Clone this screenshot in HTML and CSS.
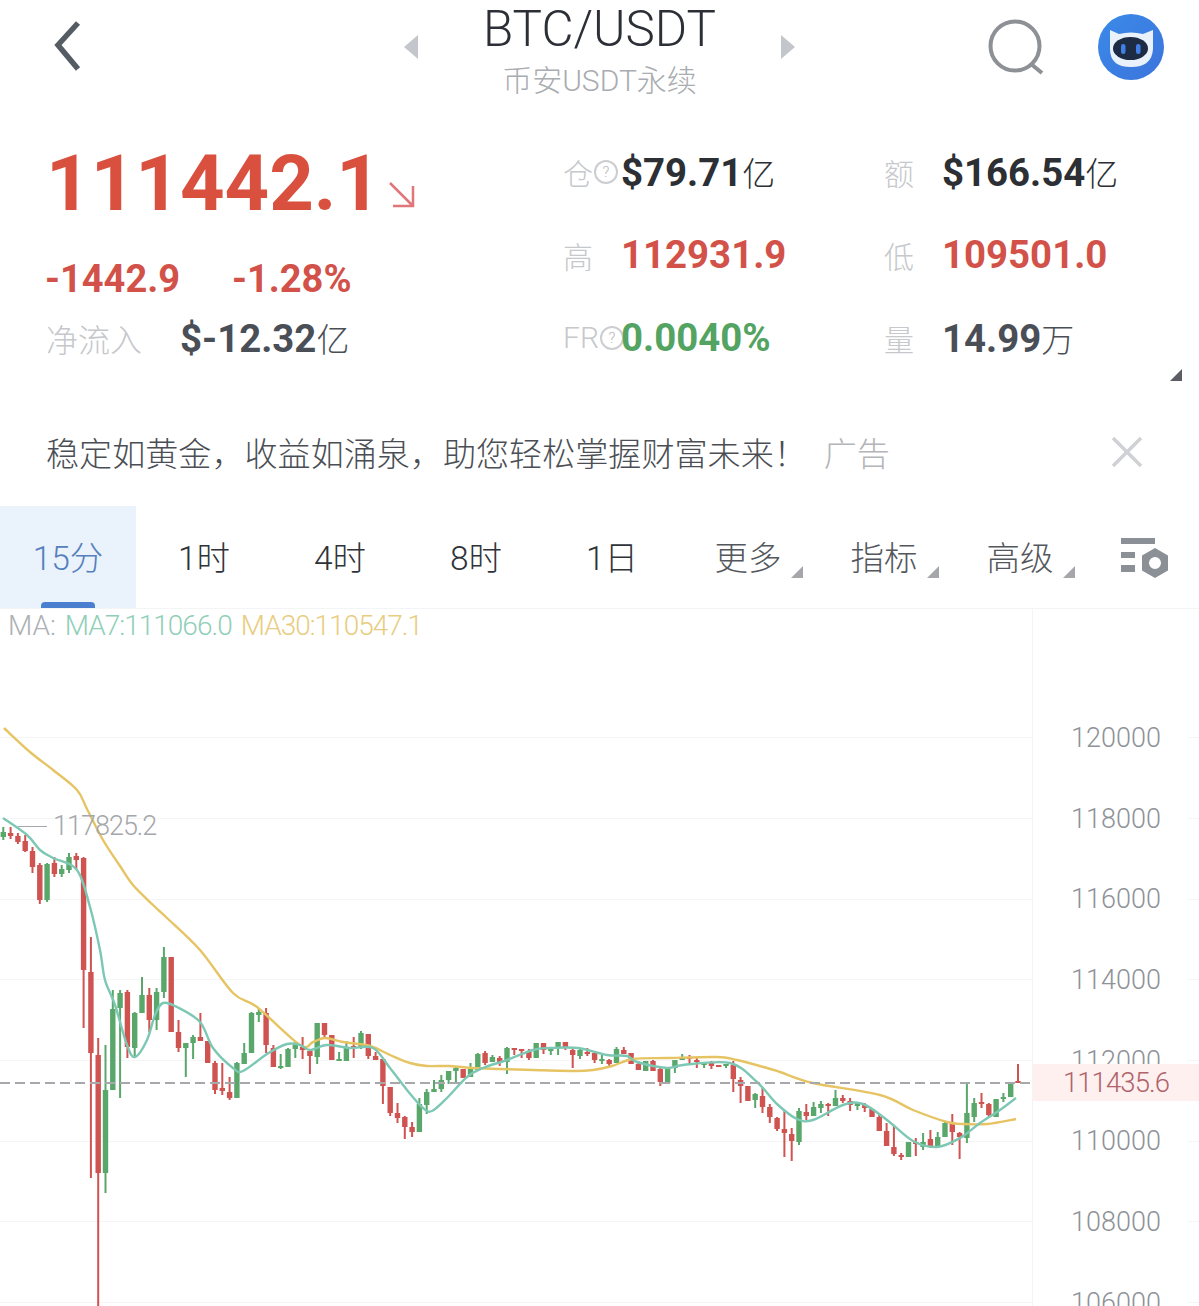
FILE: index.html
```html
<!DOCTYPE html>
<html lang="zh-CN">
<head>
  <meta charset="UTF-8">
  <meta name="viewport" content="width=device-width, initial-scale=1.0">
  <title>BTC/USDT</title>
  <link rel="stylesheet" href="styles.css">
</head>
<body>
<header class="top-bar">
  <div class="top-left">
    <svg class="back" width="30" height="54" viewBox="0 0 30 54"><path d="M26 3 L6 25 L26 49" fill="none" stroke="#565c64" stroke-width="5.5"/></svg>
  </div>
  <div class="pair">
    <span class="nav-arrow prev"></span>
    <div class="pair-name">
      <div class="pair-title">BTC/USDT</div>
      <div class="pair-sub">币安USDT永续</div>
    </div>
    <span class="nav-arrow next"></span>
  </div>
  <div class="top-right">
    <svg width="58" height="58" viewBox="0 0 58 58"><circle cx="27" cy="27" r="24.5" fill="none" stroke="#8d9094" stroke-width="4"/><path d="M43 45 L54 54" stroke="#8d9094" stroke-width="4"/></svg>
    <svg class="avatar" width="68" height="68" viewBox="0 0 68 68">
      <defs><linearGradient id="bot" x1="0" y1="0" x2="1" y2="1"><stop offset="0" stop-color="#3a8ae8"/><stop offset="1" stop-color="#3c74dc"/></linearGradient></defs>
      <circle cx="34" cy="34" r="33" fill="url(#bot)"/>
      <path d="M13 17 L22 21 Q34 18 46 21 L56 17 L56 36 Q55 54 34 54 Q13 54 13 36 Z" fill="#e9f1fa"/>
      <ellipse cx="33.5" cy="35.5" rx="17.5" ry="11.5" fill="#1d2b45"/>
      <rect x="24" y="31" width="4.5" height="10" rx="2.2" fill="#3f7fe6"/>
      <rect x="39" y="31" width="4.5" height="10" rx="2.2" fill="#3f7fe6"/>
    </svg>
  </div>
</header>

<section class="summary">
  <div class="quote">
    <div class="price-row">
      <span class="price">111442.1</span>
      <svg width="28" height="28" viewBox="0 0 28 28"><path d="M2 2 L25 25 M25 5 V25 H5" fill="none" stroke="#e0767a" stroke-width="2.5"/></svg>
    </div>
    <div class="change-row">
      <span class="change">-1442.9</span>
      <span class="change">-1.28%</span>
    </div>
    <div class="flow-row">
      <span class="label">净流入</span>
      <span class="value dark">$-12.32<small>亿</small></span>
    </div>
  </div>

  <div class="stats">
    <div class="stat"><span class="label">仓<i class="help">?</i></span><span class="value black">$79.71<small>亿</small></span></div>
    <div class="stat"><span class="label">额</span><span class="value black">$166.54<small>亿</small></span></div>
    <div class="stat"><span class="label">高</span><span class="value red">112931.9</span></div>
    <div class="stat"><span class="label">低</span><span class="value red">109501.0</span></div>
    <div class="stat"><span class="label">FR<i class="help">?</i></span><span class="value green">0.0040%</span></div>
    <div class="stat"><span class="label">量</span><span class="value dark">14.99<small>万</small></span></div>
  </div>
  <span class="corner"></span>
</section>

<section class="banner">
  <span class="banner-text">稳定如黄金，收益如涌泉，助您轻松掌握财富未来！</span>
  <span class="banner-tag">广告</span>
  <svg class="banner-close" width="32" height="32" viewBox="0 0 32 32"><path d="M2 2 L30 30 M30 2 L2 30" stroke="#cfd1d4" stroke-width="3.5"/></svg>
</section>

<nav class="tabs">
  <div class="tab active">15分</div>
  <div class="tab">1时</div>
  <div class="tab">4时</div>
  <div class="tab">8时</div>
  <div class="tab">1日</div>
  <div class="tab soft has-menu">更多</div>
  <div class="tab soft has-menu">指标</div>
  <div class="tab soft has-menu">高级</div>
  <div class="tab-icon">
    <svg width="50" height="42" viewBox="0 0 50 42">
      <path d="M1 0 H35 V6 H1 Z M1 14 H15 V20 H1 Z M1 27 H15 V34 H1 Z" fill="#8b9097"/>
      <path d="M35 10 L48 17.5 V32.5 L35 40 L22 32.5 V17.5 Z M35 19 A6 6 0 1 0 35 31 A6 6 0 1 0 35 19 Z" fill="#8b9097" fill-rule="evenodd"/>
    </svg>
  </div>
</nav>

<main class="chart">
  <svg id="kline" class="kline" width="1199" height="698" viewBox="0 608 1199 698"></svg>
  <div class="ma-legend">
    <span class="ma-name">MA:</span>
    <span class="ma7">MA7:111066.0</span>
    <span class="ma30">MA30:110547.1</span>
  </div>
  <div class="high-mark"><span class="high-line"></span>117825.2</div>
  <div class="axis">
    <div>120000</div>
    <div>118000</div>
    <div>116000</div>
    <div>114000</div>
    <div>112000</div>
    <div>110000</div>
    <div>108000</div>
    <div>106000</div>
  </div>
  <div class="last-price">111435.6</div>
</main>

<script src="chart.js"></script>
</body>
</html>
```

FILE: styles.css
```css
:root {
  --red: #d2524a;
  --green: #53a362;
  --dark: #4a4f57;
  --muted: #c6c8cb;
  --line: #f3f4f5;
}

html, body {
  height: 1306px;
  overflow: hidden;
}

body {
  margin: 0;
  background: #ffffff;
  color: #30343a;
  font-family: Roboto, "Noto Sans CJK SC", sans-serif;
}

.top-bar {
  display: grid;
  grid-template-columns: 1fr auto 1fr;
  height: 100px;
}

.top-left {
  padding: 20px 0 0 52px;
}

.top-right {
  display: flex;
  justify-content: flex-end;
  gap: 51px;
  padding: 13px 34px 0 0;
}

.top-right svg:first-child {
  margin-top: 6px;
}

.pair {
  display: flex;
  align-items: flex-start;
  gap: 65px;
}

.pair-name {
  text-align: center;
  padding-top: 1px;
}

.pair-title {
  font-size: 49.4px;
  font-weight: 300;
  line-height: 56px;
  color: #2c3036;
}

.pair-sub {
  font-size: 30px;
  font-weight: 300;
  line-height: 38px;
  margin-top: 5px;
  color: #a9acb0;
}

.nav-arrow {
  width: 0;
  height: 0;
  margin-top: 35px;
  border-top: 12px solid transparent;
  border-bottom: 12px solid transparent;
}

.nav-arrow.prev {
  border-right: 14px solid #c3c6cb;
}

.nav-arrow.next {
  border-left: 14px solid #c3c6cb;
}

.summary {
  position: relative;
  display: grid;
  grid-template-columns: 563px 1fr;
  padding-top: 30px;
  height: 251px;
}

.quote {
  padding-left: 46px;
}

.price-row {
  display: flex;
  align-items: flex-end;
  gap: 7px;
  height: 92px;
  padding-top: 8px;
}

.price-row svg {
  margin-bottom: 21px;
}

.price {
  font-size: 77.8px;
  font-weight: 700;
  line-height: 92px;
  color: #d9503f;
}

.change-row {
  display: flex;
  gap: 52px;
  margin-top: 27px;
  margin-left: -1px;
}

.change {
  font-size: 38px;
  font-weight: 700;
  line-height: 44px;
  color: var(--red);
}

.flow-row {
  display: flex;
  align-items: center;
  margin-top: 15px;
  height: 44px;
}

.flow-row .label {
  width: 134px;
  font-size: 32px;
}

.stats {
  display: grid;
  grid-template-columns: 321px 1fr;
  grid-auto-rows: 83px;
}

.stat {
  display: flex;
  align-items: center;
}

.label {
  display: flex;
  align-items: center;
  flex-shrink: 0;
  font-size: 30px;
  font-weight: 300;
  color: var(--muted);
}

.stat .label {
  width: 58px;
}

.help {
  display: flex;
  align-items: center;
  justify-content: center;
  flex-shrink: 0;
  box-sizing: border-box;
  width: 24px;
  height: 24px;
  margin-left: 1px;
  border: 2px solid #cccdd0;
  border-radius: 50%;
  font-size: 15px;
  font-style: normal;
  color: #b6b8bb;
}

.value {
  font-size: 38.4px;
  font-weight: 700;
  white-space: nowrap;
}

.value small {
  font-size: 33px;
  font-weight: 300;
}

.black { color: #2c2f33; }
.dark { color: var(--dark); }
.red { color: var(--red); }
.green { color: var(--green); }

.corner {
  position: absolute;
  right: 17px;
  bottom: 0;
  width: 0;
  height: 0;
  border-style: solid;
  border-width: 0 0 12px 12px;
  border-color: transparent transparent #5a5e64 transparent;
}

.banner {
  display: flex;
  align-items: center;
  height: 125px;
  padding: 17px 56px 0 46px;
  box-sizing: border-box;
  font-size: 33.1px;
  font-weight: 300;
}

.banner-text {
  color: #4b4f55;
  white-space: nowrap;
}

.banner-tag {
  margin-left: 17px;
  font-size: 33px;
  color: #b3b5b8;
}

.banner-close {
  margin-left: auto;
}

.tabs {
  display: flex;
  height: 102px;
}

.tab {
  position: relative;
  display: flex;
  align-items: center;
  justify-content: center;
  width: 136px;
  padding-bottom: 3px;
  box-sizing: border-box;
  font-size: 33.5px;
  font-weight: 300;
  color: #2f3338;
}

.tab.soft {
  color: #54585e;
}

.tab.active {
  background: #eaf2fb;
  color: #5580bd;
}

.tab.active::after {
  content: "";
  position: absolute;
  left: 41px;
  bottom: 0;
  width: 54px;
  height: 6px;
  border-radius: 4px 4px 0 0;
  background: #4a7fd0;
}

.tab.has-menu::after {
  content: "";
  position: absolute;
  right: 13px;
  bottom: 30px;
  border-style: solid;
  border-width: 0 0 12px 12px;
  border-color: transparent transparent #a5a7ab transparent;
}

.tab-icon {
  padding: 32px 0 0 32px;
}

.chart {
  position: relative;
  height: 698px;
  overflow: hidden;
}

.kline {
  display: block;
}

.ma-legend {
  position: absolute;
  left: 8px;
  top: 0;
  display: flex;
  gap: 9px;
  font-size: 28px;
  font-weight: 300;
  line-height: 36px;
  white-space: nowrap;
}

.ma-name { color: #aeb0b3; }
.ma7 { color: #8fcfb8; letter-spacing: -1px; }
.ma30 { color: #e8cd80; letter-spacing: -1px; }

.high-mark {
  position: absolute;
  left: 18px;
  top: 200px;
  display: flex;
  align-items: center;
  gap: 6px;
  font-size: 27px;
  font-weight: 300;
  letter-spacing: -1px;
  line-height: 36px;
  color: #a4a7ab;
}

.high-line {
  width: 29px;
  height: 1px;
  background: #a4a7ab;
}

.axis {
  position: absolute;
  left: 1033px;
  width: 166px;
  top: 90px;
  font-size: 27px;
  font-weight: 300;
  color: #8e9298;
  text-align: center;
}

.axis div {
  height: 80.7px;
  line-height: 80px;
}

.last-price {
  position: absolute;
  left: 1033px;
  top: 456px;
  width: 166px;
  height: 37px;
  background: #fdf0ef;
  font-size: 27.5px;
  font-weight: 300;
  letter-spacing: -0.9px;
  line-height: 38px;
  text-align: center;
  color: #b0636b;
}
```

FILE: chart.js
```js
const RED = '#cf5350';
const GREEN = '#5aa76b';
const STEP = 7.3;

// colour, wick top, body top, body bottom, wick bottom (page pixels)
const candles = [
  ['g',827,832,837,840],['r',827,833,836,839],['r',833,836,842,844],['r',835,841,851,852],
  ['r',847,851,867,873],['r',863,865,900,904],['g',863,864,900,902],['r',857,863,874,877],
  ['g',865,869,874,877],['g',853,857,870,873],['r',853,856,860,869],['r',857,858,970,1028],
  ['r',937,972,1053,1178],['r',1038,1055,1173,1306],['g',1045,1090,1173,1193],['g',990,1009,1090,1090],
  ['g',990,993,1008,1098],['r',990,992,1047,1058],['g',1012,1013,1048,1058],['g',977,995,1013,1013],
  ['r',988,995,1020,1032],['g',988,992,1020,1030],['g',947,957,992,998],['r',957,957,1032,1032],
  ['r',1020,1032,1048,1052],['g',1043,1043,1048,1077],['g',1035,1037,1043,1059],['r',1013,1037,1041,1041],
  ['r',1041,1041,1063,1063],['r',1061,1063,1090,1094],['r',1063,1088,1091,1095],['r',1077,1092,1098,1100],
  ['g',1062,1063,1098,1098],['g',1043,1053,1064,1064],['g',1012,1013,1053,1053],['g',1009,1012,1015,1022],
  ['r',1008,1013,1045,1053],['r',1045,1048,1067,1067],['g',1054,1066,1068,1069],['g',1048,1049,1067,1067],
  ['g',1042,1045,1049,1058],['r',1037,1047,1050,1059],['r',1049,1051,1056,1074],['g',1023,1023,1057,1064],
  ['r',1023,1023,1035,1038],['r',1035,1035,1060,1060],['g',1052,1059,1061,1061],['g',1041,1047,1061,1061],
  ['r',1037,1046,1048,1058],['g',1031,1033,1047,1049],['r',1034,1034,1056,1059],['r',1052,1056,1060,1060],
  ['r',1059,1059,1086,1104],['r',1087,1087,1113,1116],['r',1103,1113,1118,1123],['r',1116,1117,1127,1139],
  ['r',1122,1127,1132,1137],['g',1098,1104,1132,1132],['g',1089,1092,1105,1114],['g',1080,1089,1092,1092],
  ['g',1075,1080,1089,1092],['g',1071,1071,1080,1084],['g',1066,1068,1071,1083],['r',1069,1069,1078,1078],
  ['g',1063,1067,1077,1077],['g',1053,1054,1070,1070],['r',1051,1053,1063,1065],['g',1055,1057,1062,1062],
  ['r',1056,1058,1062,1066],['g',1047,1048,1062,1074],['r',1048,1048,1050,1055],['r',1049,1049,1051,1058],
  ['r',1049,1051,1058,1060],['g',1043,1043,1058,1058],['r',1043,1043,1050,1054],['g',1047,1047,1051,1055],
  ['g',1042,1042,1048,1055],['r',1042,1042,1048,1050],['r',1048,1050,1055,1068],['g',1048,1050,1056,1059],
  ['r',1048,1052,1054,1056],['r',1051,1053,1060,1063],['g',1055,1059,1060,1064],['r',1059,1060,1064,1067],
  ['g',1047,1049,1063,1063],['r',1047,1050,1054,1054],['r',1053,1053,1064,1064],['r',1061,1064,1070,1070],
  ['g',1061,1061,1071,1071],['r',1060,1061,1071,1071],['r',1068,1069,1082,1086],['g',1068,1068,1083,1083],
  ['g',1060,1060,1068,1073],['g',1054,1057,1060,1060],['r',1055,1057,1059,1063],['r',1058,1060,1062,1068],
  ['g',1062,1063,1065,1068],['r',1061,1063,1066,1069],['r',1065,1065,1067,1067],['g',1064,1064,1066,1068],
  ['r',1061,1065,1079,1092],['r',1077,1080,1086,1103],['r',1086,1086,1101,1101],['g',1093,1094,1100,1108],
  ['r',1087,1096,1107,1113],['r',1104,1107,1117,1123],['r',1117,1118,1129,1131],['r',1111,1129,1133,1157],
  ['r',1128,1134,1141,1161],['g',1108,1111,1142,1145],['r',1104,1112,1116,1120],['g',1102,1107,1116,1116],
  ['g',1101,1104,1108,1113],['r',1103,1104,1106,1116],['g',1090,1098,1106,1106],['r',1095,1098,1101,1103],
  ['r',1098,1101,1105,1111],['g',1102,1103,1106,1110],['r',1103,1105,1108,1112],['r',1109,1109,1117,1117],
  ['r',1115,1117,1131,1131],['r',1123,1131,1146,1146],['r',1125,1147,1154,1156],['r',1153,1155,1157,1160],
  ['g',1142,1142,1157,1157],['r',1138,1142,1144,1156],['g',1133,1142,1147,1150],['r',1130,1139,1147,1148],
  ['g',1132,1137,1146,1148],['g',1122,1123,1137,1137],['r',1114,1124,1132,1145],['r',1132,1133,1137,1159],
  ['g',1083,1113,1138,1143],['g',1098,1103,1117,1122],['r',1093,1102,1104,1108],['r',1103,1104,1115,1117],
  ['g',1099,1099,1117,1117],['g',1093,1097,1098,1102],['g',1082,1082,1097,1097],['r',1064,1081,1083,1083]
];

const ma30 = [
  [4,728],[30,752],[53,770],[77,790],[87,809],[103,840],[120,866],[133,885],[153,905],[167,918],[200,950],
  [233,993],[257,1007],[300,1045],[313,1042],[325,1038],[343,1042],[370,1046],[390,1055],[410,1063],
  [427,1066],[450,1066],[473,1068],[500,1069],[533,1070],[575,1071],[593,1070],[612,1066],[633,1059],[667,1058],
  [717,1057],[737,1060],[767,1068],[780,1072],[813,1083],[880,1095],[913,1110],[947,1122],[963,1124],
  [987,1124],[1016,1119]
];

const ma7 = [
  [3,818],[27,835],[40,850],[53,858],[77,870],[90,907],[100,950],[105,980],[115,1005],[127,1045],
  [135,1057],[147,1040],[155,1015],[163,1003],[177,1007],[200,1022],[213,1048],[233,1068],[243,1071],
  [267,1054],[287,1044],[300,1045],[310,1050],[327,1045],[350,1048],[373,1048],[390,1068],[407,1090],
  [423,1108],[432,1111],[447,1098],[467,1077],[483,1068],[507,1060],[533,1050],[550,1048],[578,1048],
  [607,1055],[627,1056],[637,1062],[667,1068],[683,1065],[730,1063],[757,1082],[777,1104],[797,1119],
  [813,1120],[843,1105],[863,1104],[887,1120],[913,1141],[937,1147],[960,1138],[980,1123],[1000,1110],
  [1016,1098]
];

const grid = [737, 818, 899, 979, 1060, 1141, 1221, 1302];
const svg = document.getElementById('kline');

function add(d, stroke, width, extra = {}) {
  const path = document.createElementNS('http://www.w3.org/2000/svg', 'path');
  path.setAttribute('d', d);
  path.setAttribute('fill', 'none');
  path.setAttribute('stroke', stroke);
  path.setAttribute('stroke-width', width);
  Object.entries(extra).forEach(([k, v]) => path.setAttribute(k, v));
  svg.appendChild(path);
}

// catmull-rom through the points
function smooth(pts) {
  let d = `M${pts[0][0]} ${pts[0][1]}`;
  for (let i = 0; i < pts.length - 1; i++) {
    const p0 = pts[i - 1] || pts[i];
    const p1 = pts[i];
    const p2 = pts[i + 1];
    const p3 = pts[i + 2] || p2;
    const c1 = [p1[0] + (p2[0] - p0[0]) / 6, p1[1] + (p2[1] - p0[1]) / 6];
    const c2 = [p2[0] - (p3[0] - p1[0]) / 6, p2[1] - (p3[1] - p1[1]) / 6];
    d += ` C${c1[0]} ${c1[1]} ${c2[0]} ${c2[1]} ${p2[0]} ${p2[1]}`;
  }
  return d;
}

add('M0 608.5 H1199 M1032.5 608 V1306', '#f3f4f5', 1);
add(grid.map(y => `M0 ${y}.5 H1032 M1188 ${y}.5 H1199`).join(' '), '#f5f5f6', 1);

[['r', RED], ['g', GREEN]].forEach(([type, color]) => {
  let wicks = '';
  let bodies = '';
  candles.forEach((c, i) => {
    if (c[0] !== type) return;
    const x = (3.3 + i * STEP).toFixed(1);
    wicks += `M${x} ${c[1]} V${c[4]} `;
    bodies += `M${x} ${c[2]} V${Math.max(c[3], c[2] + 2)} `;
  });
  add(wicks, color, 2);
  add(bodies, color, 5.4);
});

add(smooth(ma30), '#e6c463', 2.4);
add(smooth(ma7), '#7cc8b4', 2.4);
add('M0 1083 H1032', '#a6a8ac', 2, { 'stroke-dasharray': '10 5' });
```
